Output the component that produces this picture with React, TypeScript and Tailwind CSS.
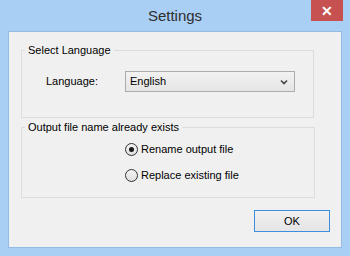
import { useState } from 'react';

const font = { fontFamily: '"Liberation Sans", Arial, sans-serif' };

function Radio({
  checked,
  label,
  onSelect,
}: {
  checked: boolean;
  label: string;
  onSelect: () => void;
}) {
  return (
    <button
      type="button"
      onClick={onSelect}
      className="flex h-[13px] items-center gap-[3px] text-[11px] text-black"
    >
      <span className="flex h-[13px] w-[13px] items-center justify-center rounded-full border border-[#333] bg-gradient-to-b from-[#f4f4f4] to-[#dedede]">
        {checked && <span className="h-[5px] w-[5px] rounded-full bg-[#1a1a1a]" />}
      </span>
      <span>{label}</span>
    </button>
  );
}

export default function App() {
  const [mode, setMode] = useState<'rename' | 'replace'>('rename');

  return (
    <div
      className="flex h-[256px] w-[350px] flex-col bg-[#a9cff5]"
      style={font}
    >
      {/* Title bar */}
      <div className="relative flex h-[31px] items-center justify-center">
        <span className="text-[15px] leading-none text-[#2e2e2e]">Settings</span>
        <div className="absolute right-[7px] top-0 flex h-[21px] w-[32px] items-center justify-center bg-[#c75050] text-[14px] font-bold leading-none text-white">
          ✕
        </div>
      </div>

      {/* Client area */}
      <div className="mx-[8px] mb-[8px] flex flex-1 flex-col border border-[#93bbe3] bg-[#f0f0f0] pl-[12px] pr-[11px] pt-[11px]">
        <fieldset className="mr-[16px] h-[75px] border border-[#dcdcdc]">
          <legend className="ml-[3px] px-[3px] text-[11px] leading-[14px] text-black">
            Select Language
          </legend>
          <div className="mt-[14px] flex items-center pl-[24px]">
            <span className="w-[79px] text-[11px] text-black">Language:</span>
            <div className="flex h-[21px] w-[170px] items-center justify-between border border-[#acacac] bg-gradient-to-b from-[#f2f2f2] to-[#e5e5e5] pl-[4px] pr-[6px] text-[11px] text-black">
              <span>English</span>
              <svg width="8" height="6" viewBox="0 0 8 6">
                <path d="M1 1.5 L4 4.5 L7 1.5" fill="none" stroke="#444" strokeWidth="1.6" />
              </svg>
            </div>
          </div>
        </fieldset>

        <fieldset className="mr-[15px] mt-[2px] h-[78px] border border-[#dcdcdc]">
          <legend className="ml-[3px] px-[3px] text-[11px] leading-[14px] text-black">
            Output file name already exists
          </legend>
          <div className="ml-[103px] mt-[9px] flex flex-col gap-[13px]">
            <Radio
              checked={mode === 'rename'}
              label="Rename output file"
              onSelect={() => setMode('rename')}
            />
            <Radio
              checked={mode === 'replace'}
              label="Replace existing file"
              onSelect={() => setMode('replace')}
            />
          </div>
        </fieldset>

        <div className="mt-[12px] flex justify-end">
          <button
            type="button"
            className="h-[22px] w-[76px] border border-[#3c8ee0] bg-gradient-to-b from-[#f0f0f0] to-[#e5e5e5] text-[11px] text-black"
          >
            OK
          </button>
        </div>
      </div>
    </div>
  );
}
